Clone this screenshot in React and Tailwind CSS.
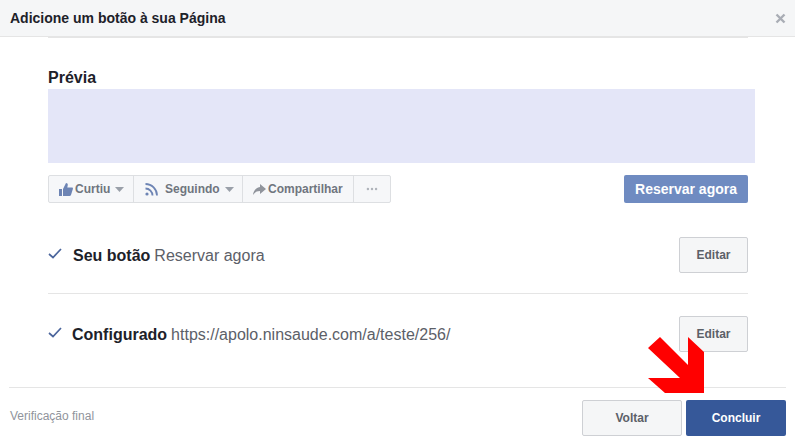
import { MoreHorizontal } from 'lucide-react';

const Caret = () => (
  <svg width="9" height="5" viewBox="0 0 9 5" className="ml-[5px]">
    <path d="M0 0h9L4.500 5z" fill="#9aa0a9" />
  </svg>
);

const Check = () => (
  <svg width="14" height="11" viewBox="0 0 14 11" fill="none">
    <path d="M1 6l4 3.500L13 1" stroke="#4b659c" strokeWidth="1.700" />
  </svg>
);

const EditButton = () => (
  <button className="w-[69px] h-[36px] bg-[#f5f6f7] border border-[#ced0d4] rounded-[2px] text-[12px] font-bold text-[#5c6068]">
    Editar
  </button>
);

const App = () => {
  return (
    <div className="relative w-[795px] h-[444px] bg-white overflow-hidden font-['Liberation_Sans',Arial,sans-serif]">
      {/* Header */}
      <div className="h-[37px] bg-[#f5f6f7] border-b border-[#e5e5e5] flex items-center justify-between pl-[10px] pr-[9px]">
        <h1 className="text-[14px] font-bold text-[#1d2129]">Adicione um botão à sua Página</h1>
        <svg width="11" height="11" viewBox="0 0 11 11">
          <path d="M1.500 1.500l8 8M9.500 1.500l-8 8" stroke="#a9adb5" strokeWidth="2.400" />
        </svg>
      </div>

      <div className="pl-[48px] pr-[40px]">
        <div className="w-[700px] h-px bg-[#e5e5e5]" />

        {/* Preview */}
        <h2 className="mt-[30px] h-[21px] text-[16px] leading-[19px] font-bold text-[#1d2129]">Prévia</h2>
        <div className="w-[707px] h-[74px] bg-[#e4e6f8]" />

        <div className="mt-[12px] w-[700px] flex items-center justify-between">
          <div className="flex h-[28px] border border-[#dddfe2] rounded-[2px] bg-[#f6f7f9] text-[12px] font-bold text-[#6f757e]">
            <div className="w-[85px] flex items-center pl-[10px] border-r border-[#dddfe2]">
              <svg width="14" height="13" viewBox="0 0 14 13" className="mr-[2px]">
                <path d="M0 6h3v7H0zM4 6l3-6c1.500 0 2 1.200 1.700 2.500L8.300 4.500H13c1 0 1.200 1.300.7 2L12 12c-.3.700-.8 1-1.500 1H4z" fill="#6d84b4" />
              </svg>
              Curtiu
              <Caret />
            </div>
            <div className="w-[109px] flex items-center pl-[11px] border-r border-[#dddfe2]">
              <svg width="13" height="13" viewBox="0 0 13 13" className="mr-[7px]" fill="none">
                <circle cx="2" cy="11" r="1.600" fill="#6d84b4" />
                <path d="M0.500 5.500a7 7 0 0 1 7 7M0.500 1a11.500 11.500 0 0 1 11.500 11.500" stroke="#6d84b4" strokeWidth="1.800" />
              </svg>
              Seguindo
              <Caret />
            </div>
            <div className="w-[111px] flex items-center pl-[10px] border-r border-[#dddfe2]">
              <svg width="13" height="11" viewBox="0 0 13 11" className="mr-[2px]">
                <path d="M7 0l6 5-6 5V7C4 7 2 8 0 11c.5-4.500 3-7.500 7-8z" fill="#90949c" />
              </svg>
              Compartilhar
            </div>
            <div className="w-[36px] flex items-center justify-center">
              <MoreHorizontal size={14} color="#b0b4bb" strokeWidth={2.200} />
            </div>
          </div>
          <button className="w-[124px] h-[28px] bg-[#6f8bc1] rounded-[2px] text-[14px] font-bold text-white">
            Reservar agora
          </button>
        </div>

        {/* Steps */}
        <div className="mt-[34px] w-[700px] flex items-center justify-between h-[36px]">
          <div className="mt-[2px] flex items-center text-[16px] text-[#5c6068]">
            <span className="w-[25px] -mt-[6px]"><Check /></span>
            <span className="font-bold text-[#1d2129] mr-[4px]">Seu botão</span>
            Reservar agora
          </div>
          <EditButton />
        </div>
        <div className="mt-[20px] w-[700px] h-px bg-[#e5e5e5]" />
        <div className="mt-[22px] w-[700px] flex items-center justify-between h-[36px]">
          <div className="mt-[2px] flex items-center text-[16px] text-[#5c6068]">
            <span className="w-[24px] -mt-[6px]"><Check /></span>
            <span className="font-bold text-[#1d2129] mr-[4px]">Configurado</span>
            https://apolo.ninsaude.com/a/teste/256/
          </div>
          <EditButton />
        </div>
      </div>

      {/* Footer */}
      <div className="mt-[35px] mx-[9px] border-t border-[#e5e5e5] pt-[12px] flex items-center justify-between">
        <span className="pl-px -mt-[4px] text-[12px] text-[#90949c]">Verificação final</span>
        <div className="flex gap-[4px]">
          <button className="w-[100px] h-[36px] bg-[#f5f6f7] border border-[#ced0d4] rounded-[2px] text-[12px] font-bold text-[#5c6068]">
            Voltar
          </button>
          <button className="w-[100px] h-[36px] bg-[#365899] rounded-[2px] text-[12px] font-bold text-white">
            Concluir
          </button>
        </div>
      </div>

      {/* Red arrow annotation */}
      <svg className="absolute left-[640px] top-[330px]" width="70" height="70" viewBox="640 330 70 70">
        <path d="M648 348L660 337L688 365V337L704 352V393H665L648 378H680z" fill="#ff0000" />
      </svg>
    </div>
  );
};

export default App;
